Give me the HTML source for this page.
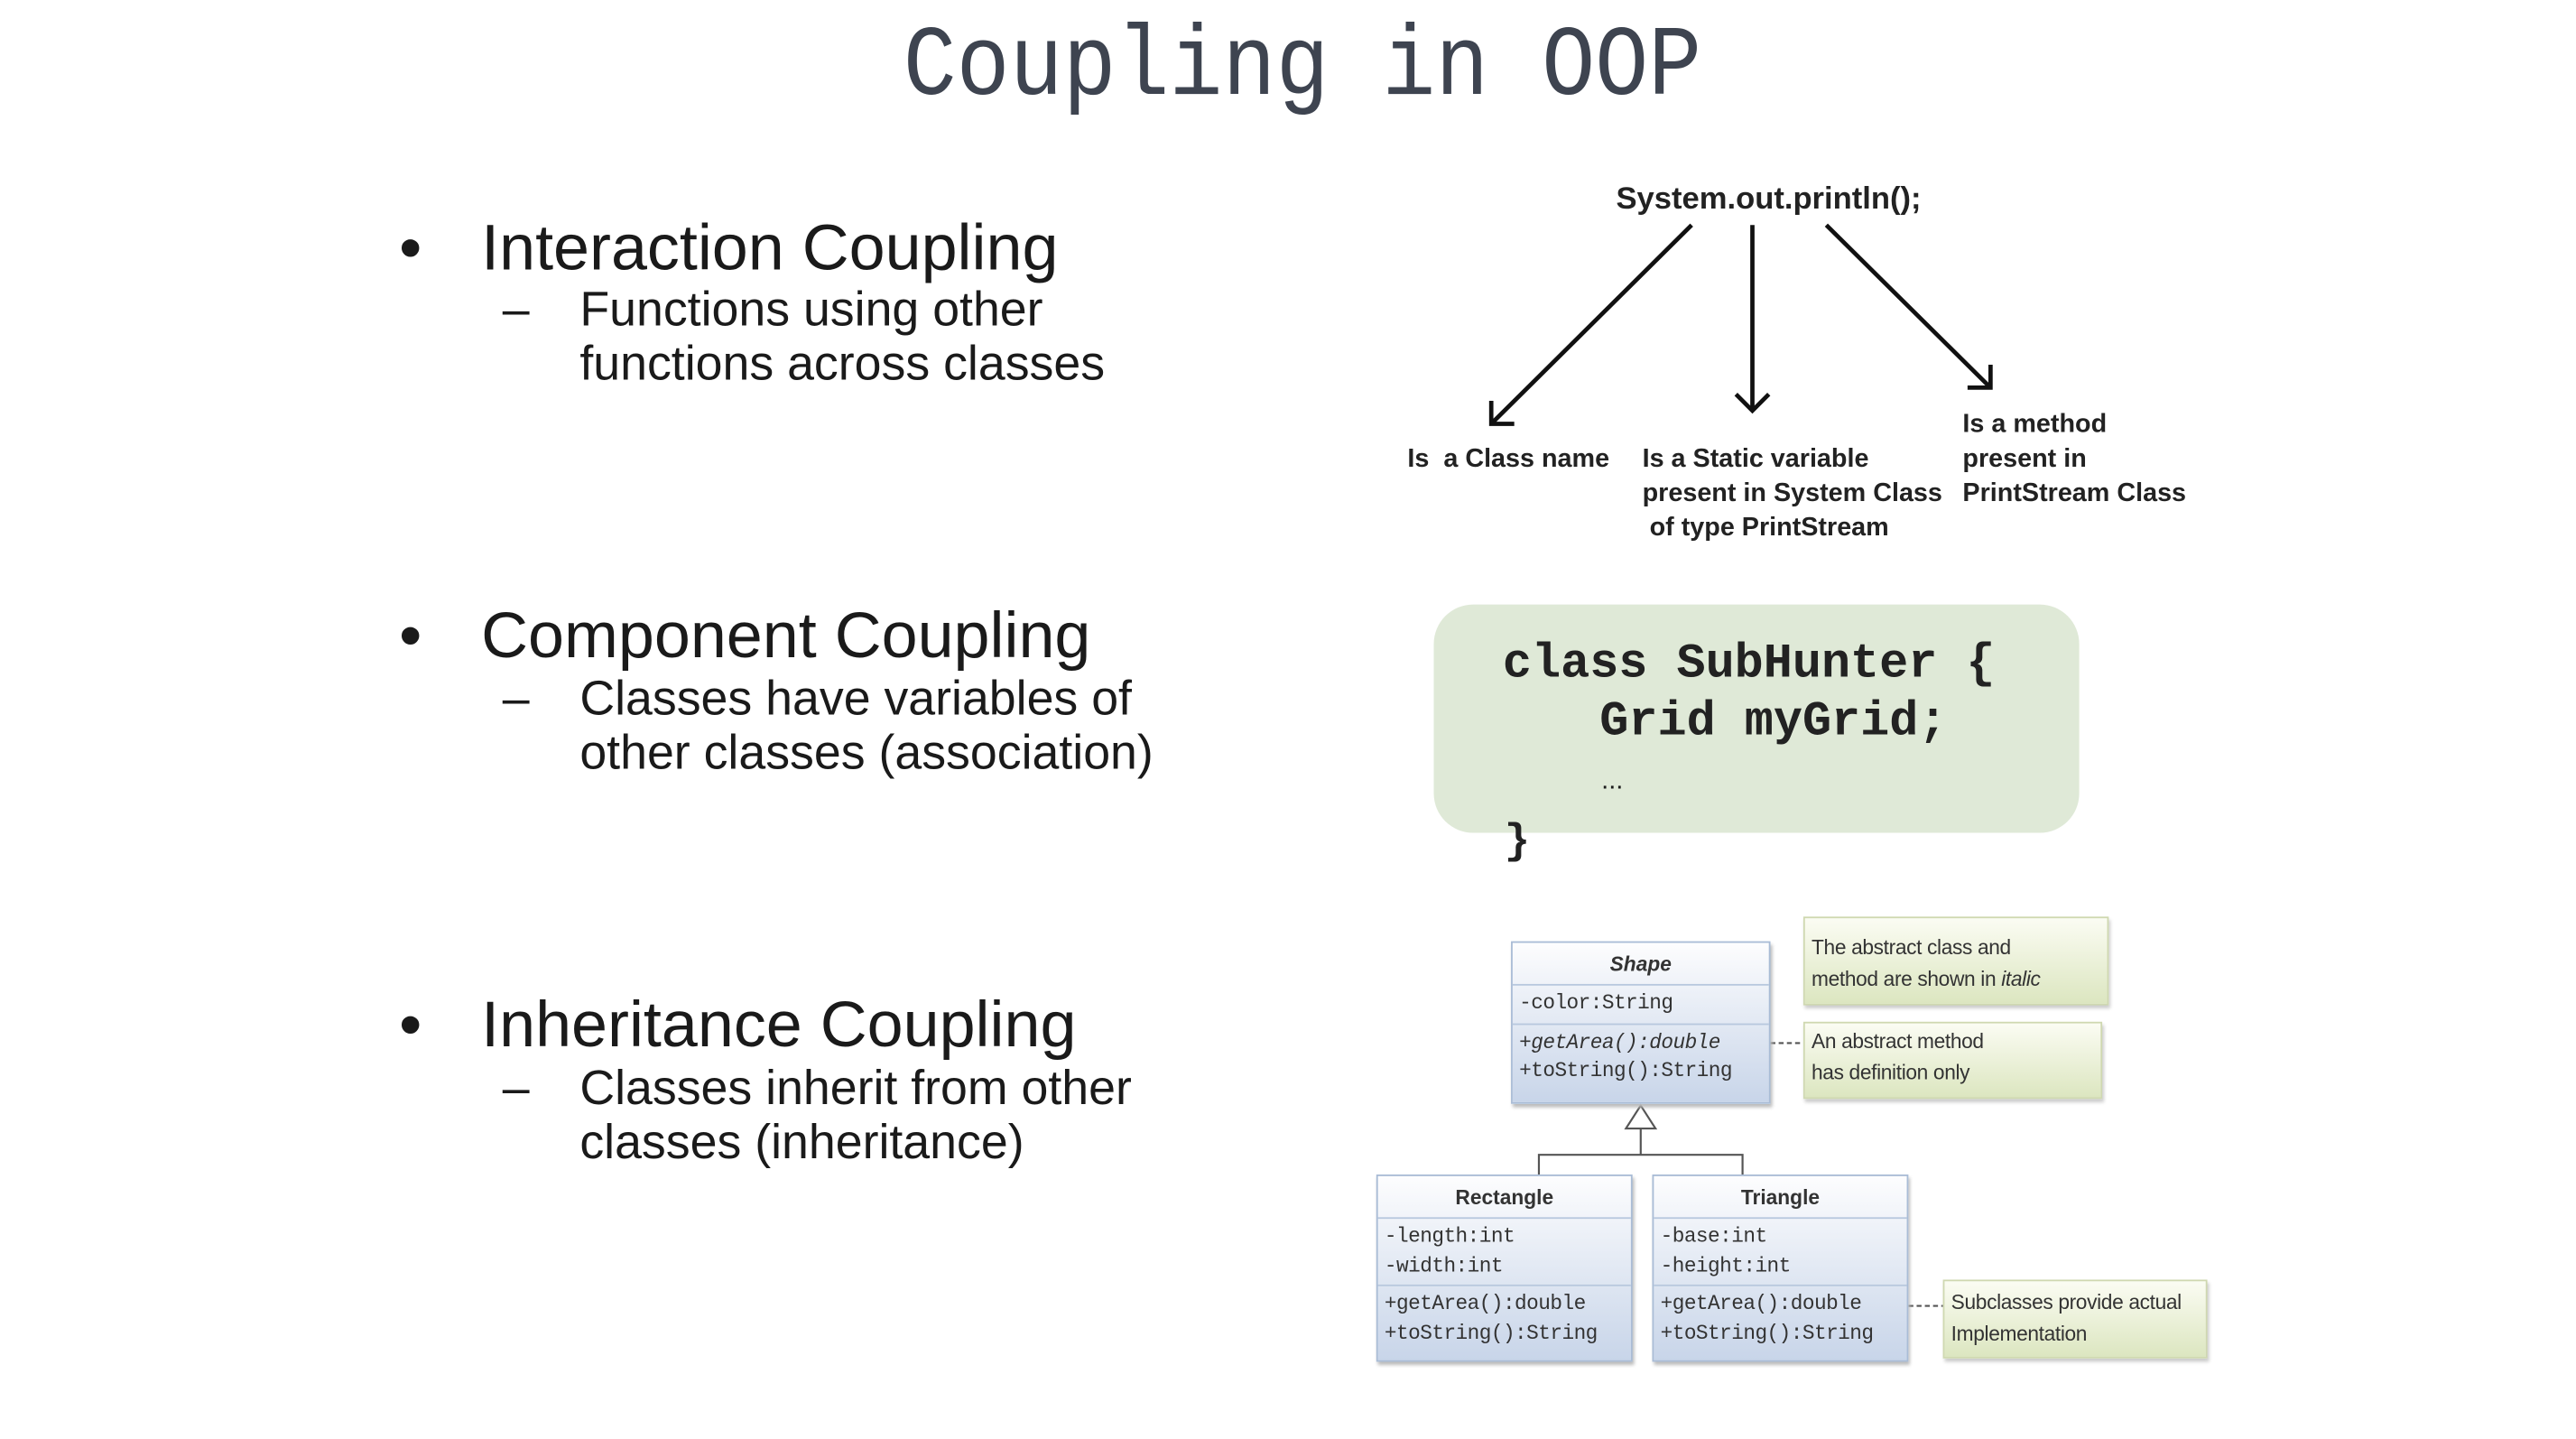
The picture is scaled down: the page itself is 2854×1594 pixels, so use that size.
<!DOCTYPE html>
<html><head><meta charset="utf-8"><style>
html,body{margin:0;padding:0;background:#fff;width:2854px;height:1594px;overflow:hidden}
#c{position:absolute;left:0;top:0;width:1568px;height:876px;transform:scale(1.8196);transform-origin:0 0;font-family:"Liberation Sans",sans-serif;color:#1a1a1a}
.a{position:absolute;white-space:nowrap}
.t{font-family:"Liberation Mono",monospace;font-size:54px;color:#3e4450;left:0;width:1586px;text-align:center;top:8px;transform:scaleY(1.12);transform-origin:0 0}
.b{font-size:39.5px}
.s{font-size:29.5px;line-height:33px}
.lb{font-size:15.8px;font-weight:bold;line-height:21px;color:#222}
.code{font-family:"Liberation Mono",monospace;font-weight:bold;font-size:29.4px;color:#222}
.box{position:absolute;border:1.5px solid #a9bcd6;background:linear-gradient(#fdfdfe,#c8d5e9);box-shadow:1px 2px 2px #bbb}
.box div{border-bottom:1.5px solid #b8c8de;font-family:"Liberation Mono",monospace;font-size:12.5px;padding:3px 4px 2px;line-height:17.5px;color:#333;letter-spacing:-0.3px}
.box div:last-child{border-bottom:none}
.hd{text-align:center;font-weight:bold;font-family:"Liberation Sans",sans-serif!important;padding-top:5px!important;letter-spacing:0!important}
.note{position:absolute;border:1px solid #cfd8b0;background:linear-gradient(#fbfcf3,#dce6c0);font-size:12.5px;line-height:19px;padding:6px 4px;color:#333;box-shadow:1px 2px 2px #ccc;box-sizing:border-box;white-space:nowrap;letter-spacing:-0.2px}
</style></head><body><div id="c">
<div class="a t">Coupling in OOP</div>

<div class="a b" style="left:243px;top:129px">•</div>
<div class="a b" style="left:293px;top:129px">Interaction Coupling</div>
<div class="a s" style="left:306px;top:172px">–</div>
<div class="a s" style="left:353px;top:172px">Functions using other<br>functions across classes</div>

<div class="a b" style="left:243px;top:365px">•</div>
<div class="a b" style="left:293px;top:365px">Component Coupling</div>
<div class="a s" style="left:306px;top:409px">–</div>
<div class="a s" style="left:353px;top:409px">Classes have variables of<br>other classes (association)</div>

<div class="a b" style="left:243px;top:602px">•</div>
<div class="a b" style="left:293px;top:602px">Inheritance Coupling</div>
<div class="a s" style="left:306px;top:646px">–</div>
<div class="a s" style="left:353px;top:646px">Classes inherit from other<br>classes (inheritance)</div>

<div class="a" style="left:984px;top:111px;font-size:19px;font-weight:bold;color:#222">System.out.println();</div>
<svg class="a" style="left:0;top:0" width="1568" height="876">
<g stroke="#111" stroke-width="2.6" fill="none">
<line x1="1030" y1="137" x2="908" y2="258"/><polyline points="908,244 908,258 922,258"/>
<line x1="1067" y1="137" x2="1067" y2="250"/><polyline points="1057,240 1067,250 1077,240"/>
<line x1="1112" y1="137" x2="1212" y2="236"/><polyline points="1212,222 1212,236 1198,236"/>
</g>
<g stroke="#555" stroke-width="1.2" fill="none">
<polygon points="999,673 990,687 1008,687" fill="#fff"/>
<line x1="999" y1="687" x2="999" y2="703"/>
<polyline points="937,715 937,703 1061,703 1061,715"/>
<line x1="1068" y1="635" x2="1098" y2="635" stroke-dasharray="3,2"/>
<line x1="1152" y1="795" x2="1183" y2="795" stroke-dasharray="3,2"/>
</g>
<circle cx="1066" cy="635" r="2.2" fill="#222"/><circle cx="1151" cy="795" r="2.2" fill="#222"/>
</svg>
<div class="a lb" style="left:857px;top:269px">Is&nbsp; a Class name</div>
<div class="a lb" style="left:1000px;top:269px">Is a Static variable<br>present in System Class<br>&nbsp;of type PrintStream</div>
<div class="a lb" style="left:1195px;top:248px">Is a method<br>present in<br>PrintStream Class</div>

<div class="a" style="left:873px;top:368px;width:393px;height:139px;border-radius:24px;background:#dfe9d7"></div>
<div class="a code" style="left:915px;top:388px">class SubHunter {</div>
<div class="a code" style="left:974px;top:423px">Grid myGrid;</div>
<div class="a" style="left:975px;top:467px;font-size:16px">...</div>
<div class="a code" style="left:916px;top:497px;font-size:26px">}</div>

<div class="box" style="left:920px;top:573px;width:156px">
<div class="hd" style="height:18px"><i>Shape</i></div>
<div>-color:String</div>
<div style="padding-bottom:9px"><i>+getArea():double</i><br>+toString():String</div>
</div>
<div class="box" style="left:838px;top:715px;width:154px">
<div class="hd" style="height:18px">Rectangle</div>
<div>-length:int<br>-width:int</div>
<div style="padding-bottom:7px">+getArea():double<br>+toString():String</div>
</div>
<div class="box" style="left:1006px;top:715px;width:154px">
<div class="hd" style="height:18px">Triangle</div>
<div>-base:int<br>-height:int</div>
<div style="padding-bottom:7px">+getArea():double<br>+toString():String</div>
</div>
<div class="note" style="left:1098px;top:558px;width:186px;height:54px;padding-top:9px">The abstract class and<br>method are shown in <i>italic</i></div>
<div class="note" style="left:1098px;top:622px;width:182px;height:47px;padding-top:2px">An abstract method<br>has definition only</div>
<div class="note" style="left:1183px;top:779px;width:161px;height:48px;padding-top:4px">Subclasses provide actual<br>Implementation</div>
</div></body></html>
